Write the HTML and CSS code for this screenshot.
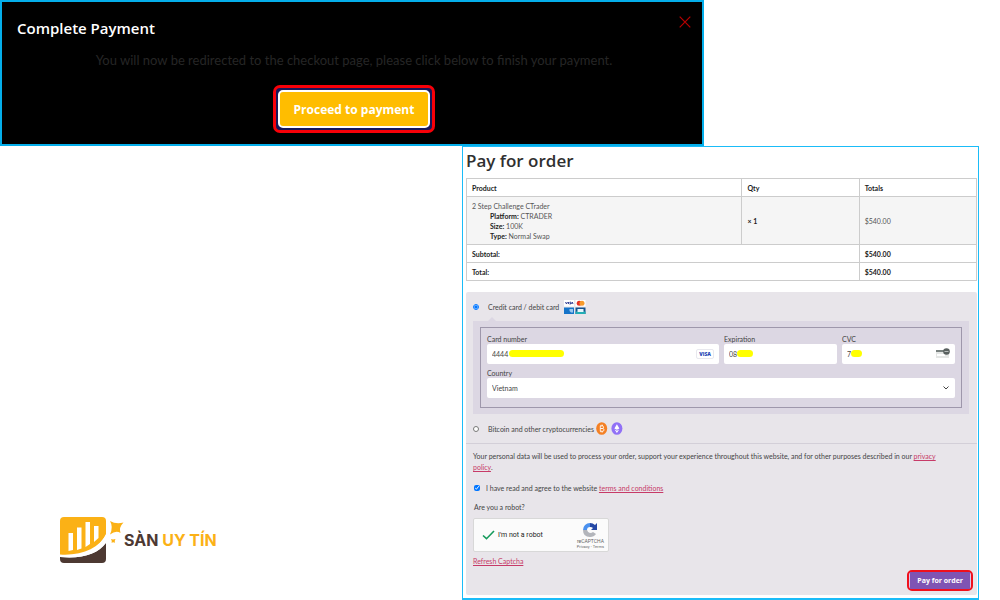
FILE: index.html
```html
<!DOCTYPE html>
<html lang="en">
<head>
<meta charset="utf-8">
<meta name="viewport" content="width=device-width, initial-scale=1">
<title>Pay for order</title>
<link rel="stylesheet" href="styles.css">
</head>
<body>
<section class="modal">
  <header class="modal-head">
    <h2 class="modal-title">Complete Payment</h2>
    <button class="close" type="button" aria-label="Close">
      <svg viewBox="0 0 12 12" width="12" height="12"><path d="M.7.7l10.6 10.6M11.3.7L.7 11.3" stroke="#b80000" stroke-width="1.200" fill="none"/></svg>
    </button>
  </header>
  <p class="modal-text">You will now be redirected to the checkout page, please click below to finish your payment.</p>
  <div class="proceed-ring"><button class="proceed" type="button">Proceed to payment</button></div>
</section>
<div class="lower">
  <aside class="brand">
    <svg class="brand-mark" viewBox="0 0 64 48" width="64" height="48" aria-hidden="true">
      <path d="M4 1h38q4 0 4 4v13C38 34 24 40 0 39V5q0-4 4-4z" fill="#fbb116"/>
      <path d="M0 41c22 2 38-3 46-14v16q0 4-4 4H4q-4 0-4-4z" fill="#4d3932"/>
      <path d="M8.500 17H13v17l-4.500 1zM17 11.500h4.500v21L17 34zM25.500 6H30v22l-4.500 3zM34 10h4.500v12L34 26z" fill="#fff"/>
      <path d="M0 38.500C22 40 39 32 46.500 18v8C38 38 23 43 0 41z" fill="#fff"/>
      <path d="M50 5q6 3.500 13.500 1.500-5 5-3 10.500-4.500-3-10.500 1.500Q53.500 11 50 5z" fill="#fbb116"/>
      <path d="M51 23l2 .5 2.500-.5-.8 2 .3 1.700-1.800-.5-1.700.6.3-1.800z" fill="#fbb116"/>
    </svg>
    <span class="brand-name">SÀN <span class="brand-accent">UY TÍN</span></span>
  </aside>
  <main class="order">
    <h1 class="order-title">Pay for order</h1>
    <table class="items">
      <colgroup><col class="col-product"><col class="col-qty"><col></colgroup>
      <thead><tr><th>Product</th><th>Qty</th><th>Totals</th></tr></thead>
      <tbody>
        <tr class="item">
          <td>2 Step Challenge CTrader
            <ul class="meta"><li><b>Platform:</b> CTRADER</li><li><b>Size:</b> 100K</li><li><b>Type:</b> Normal Swap</li></ul>
          </td>
          <td><b>× 1</b></td><td>$540.00</td>
        </tr>
      </tbody>
      <tfoot>
        <tr><th colspan="2">Subtotal:</th><th>$540.00</th></tr>
        <tr><th colspan="2">Total:</th><th>$540.00</th></tr>
      </tfoot>
    </table>
    <form class="payment">
      <div class="method">
        <input class="radio" type="radio" name="method" id="card" checked>
        <label for="card">Credit card / debit card</label>
        <svg class="cards" viewBox="0 0 22 14" width="22" height="14" aria-hidden="true">
          <path d="M0 0h10v6.500H0zM11.500 0h10v6.500h-10z" fill="#fff"/>
          <path d="M1.500 2l1 2 1-2M4.500 2v2M7 2.200H5.800L6.700 4H5.500M7.500 4l.7-2 .8 2" stroke="#26328c" stroke-width=".9" fill="none"/>
          <circle cx="15.200" cy="3.200" r="2.500" fill="#e83222"/><circle cx="18" cy="3.200" r="2.500" fill="#f79b2b"/>
          <path d="M0 7.500h10V14H0z" fill="#1674c9"/><path d="M5.500 9h3.500v3.500H7L5.500 11z" fill="#9bc9ef"/>
          <path d="M11.500 7.500h10V14h-10z" fill="#16528d"/><path d="M11.500 11.500h10V14h-10z" fill="#23aeb5"/><path d="M13.500 9h6v3h-6z" fill="#e6f5fa"/>
        </svg>
      </div>
      <div class="card-box">
        <fieldset class="fields">
          <div class="field">
            <label for="num">Card number</label>
            <div class="control"><input class="box" id="num" value="4444"><span class="mask mask-num"></span>
              <span class="visa">VISA</span></div>
          </div>
          <div class="field">
            <label for="exp">Expiration</label>
            <div class="control"><input class="box" id="exp" value="08"><span class="mask mask-exp"></span></div>
          </div>
          <div class="field">
            <label for="cvc">CVC</label>
            <div class="control"><input class="box" id="cvc" value="7"><span class="mask mask-cvc"></span>
              <svg class="cvc-icon" viewBox="0 0 14 11" width="14" height="11" aria-hidden="true"><path d="M0 2h13v8H0z" fill="#e4e6e5"/><path d="M0 2h9v2H0z" fill="#79817f"/><path d="M1 6h8v2H1z" fill="#fff"/><circle cx="10.500" cy="3.500" r="3.300" fill="#59605f"/><path d="M8.500 3.500h4" stroke="#b6bbba"/></svg>
            </div>
          </div>
          <div class="field field-wide">
            <label for="country">Country</label>
            <div class="control">
              <select class="box" id="country"><option>Vietnam</option></select>
              <svg class="chevron" viewBox="0 0 6 4" width="6" height="4" aria-hidden="true"><path d="M.5.5L3 3 5.500.5" stroke="#444" fill="none"/></svg>
            </div>
          </div>
        </fieldset>
      </div>
      <div class="method">
        <input class="radio" type="radio" name="method" id="crypto">
        <label for="crypto">Bitcoin and other cryptocurrencies</label>
        <svg class="coins" viewBox="0 0 27 13" width="27" height="13" aria-hidden="true">
          <ellipse cx="5.700" cy="6.500" rx="5.500" ry="6.300" fill="#f48024"/>
          <path d="M4.300 3.800v5.600M4 4h2.400q1.200 0 1.200 1.200T6.400 6.500H4.500h2.300Q8 6.500 8 7.900T6.600 9.200H4M5.200 2.700V4M5.200 9.200v1.200M6.500 2.700V4M6.500 9.200v1.200" stroke="#fff" stroke-width=".8" fill="none"/>
          <ellipse cx="20.900" cy="6.500" rx="5.500" ry="6.300" fill="#9171f6"/>
          <path d="M20.900 2.200l2.500 4.300-2.500 1.300-2.500-1.300zM18.600 7.500l2.300 1.200 2.300-1.200-2.300 3.400z" fill="#fff"/>
        </svg>
      </div>
      <div class="terms">
        <p class="privacy">Your personal data will be used to process your order, support your experience throughout this website, and for other purposes described in our <a href="#">privacy policy</a>.</p>
        <div class="agree"><input class="check" type="checkbox" id="agree" checked><label for="agree">I have read and agree to the website <a href="#">terms and conditions</a></label></div>
        <p class="robot-q">Are you a robot?</p>
        <div class="captcha">
          <svg viewBox="0 0 13 10" width="13" height="10" aria-hidden="true"><path d="M1 5.500l3.500 3.200L12 1" stroke="#159a5b" stroke-width="1.600" fill="none"/></svg>
          <span>I'm not a robot</span>
          <div class="recaptcha">
            <svg viewBox="0 0 16 16" width="16" height="16" aria-hidden="true">
              <path d="M1 8A7 7 0 0 1 8 1v4a3 3 0 0 0-3 3z" fill="#4a90ee"/>
              <path d="M8 1q3 0 5 2l2-2v7H9l2-2q-1-1-3-1z" fill="#2347a5"/>
              <path d="M1 8h4q1 3 3 3 2 0 3-1l3 2q-2 3-6 3-7 0-7-7z" fill="#b3b5bb"/>
            </svg>
            <span class="rc-name">reCAPTCHA</span><span class="rc-links">Privacy - Terms</span>
          </div>
        </div>
        <a class="refresh" href="#">Refresh Captcha</a>
        <div class="pay-ring"><button class="pay" type="button">Pay for order</button></div>
      </div>
    </form>
  </main>
</div>
</body>
</html>
```
FILE: styles.css
```css
* { box-sizing: border-box; }
body { margin: 0; background: #fff; color: #444; font-family: Lato, "Open Sans", sans-serif; font-size: 7px; line-height: 10px; }
h1, h2, p, ul { margin: 0; padding: 0; }
button, input, select { font: inherit; color: inherit; margin: 0; }
svg { display: block; flex: none; }
a { color: #c73a68; }

.modal { width: 70.4%; background: #000; border: 2px solid #04aeea; padding: 14px 11px 11px 15px; display: flex; flex-direction: column; align-items: center; }
.modal-head { align-self: stretch; display: flex; justify-content: space-between; align-items: flex-start; }
.modal-title { color: #fff; font: 600 15px/24px "Open Sans", sans-serif; }
.close { background: none; border: 0; padding: 0; }
.modal-text { color: #262626; font-size: 13px; line-height: 20px; margin-top: 10px; }
.proceed-ring { margin-top: 15px; border: 3px solid #f80008; border-radius: 7px; padding: 2px; background: #17175a; }
.proceed { display: block; height: 38px; padding: 2px 14px 0; border: 2px solid #fff; border-radius: 5px; background: #ffbd00; color: #fff; font: 700 12px/20px "Open Sans", sans-serif; }

.lower { display: grid; grid-template-columns: 462px minmax(0, 1fr); padding-right: 21px; }
.brand { align-self: end; display: flex; align-items: center; padding: 0 0 36px 60px; }
.brand-name { color: #4d3932; font: 700 16px/24px Inter, sans-serif; }
.brand-accent { color: #fbb116; }

.order { border: 1px solid #1abcf8; border-bottom-width: 2px; padding: 2px 1px 3px 3px; }
.order-title { color: #303030; font: 600 17px/24px "Open Sans", sans-serif; padding-bottom: 5px; }

.items { width: 100%; border-collapse: collapse; table-layout: fixed; color: #555; }
.items th, .items td { border: 1px solid #ccc; text-align: left; padding: 4px 5px 3px; }
.items th, .items b { color: #222; font-weight: 700; }
.items .item td { background: #f5f5f5; }
.col-product { width: 54%; }
.col-qty { width: 23%; }
.meta { list-style: none; padding-left: 18px; }

.payment { margin-top: 11px; background: #e8e5ea; border-radius: 2px; }
.method { display: flex; align-items: center; height: 29px; padding-left: 7px; }
.radio { width: 6px; height: 6px; margin-right: 9px; }
.cards { margin-left: 5px; }
.card-box { position: relative; margin: 0 8px 0 7px; padding: 6px 7px 6px 7px; background: #dcd7e3; }
.card-box::before { content: ""; position: absolute; left: 15px; top: -4px; border: 4px solid transparent; border-top: 0; border-bottom-color: #dcd7e3; }
.fields { margin: 0; min-width: 0; border: 1px solid #9e97ab; padding: 6px 6px 9px; display: grid; grid-template-columns: 232fr 113fr 113fr; gap: 4px 5px; }
.field-wide { grid-column: 1 / -1; }
.field > label { display: block; }
.control { position: relative; }
.box { display: block; width: 100%; height: 20px; border: 0; border-radius: 2px; background: #fff; padding: 0 5px; appearance: none; }
.mask { position: absolute; top: 6px; height: 7px; border-radius: 4px; background: #ff0; }
.mask-num { left: 22px; width: 55px; }
.mask-exp { left: 13px; width: 16px; }
.mask-cvc { left: 9px; width: 11px; }
.visa { position: absolute; right: 5px; top: 5px; padding: 0 2px; border: 1px solid #e8e8ee; border-radius: 2px; color: #2547b5; font: 800 5px/8px "Open Sans", sans-serif; }
.cvc-icon { position: absolute; right: 5px; top: 4px; }
.chevron { position: absolute; right: 6px; top: 8px; }
.coins { margin-left: 2px; }

.terms { border-top: 1px solid #d3cfd8; padding: 7px 4px 4px 7px; }
.privacy { line-height: 11px; padding-right: 20px; }
.agree { display: flex; align-items: center; margin-top: 10px; }
.check { width: 6px; height: 6px; margin: 0 6px 0 1px; }
.robot-q { margin: 9px 0 6px 1px; }
.captcha { width: 136px; height: 34px; display: flex; align-items: center; gap: 3px; padding: 0 4px 0 8px; background: #fbfbfb; border: 1px solid #d8d8d8; border-radius: 2px; color: #222; font-family: Roboto, sans-serif; }
.recaptcha { margin-left: auto; display: flex; flex-direction: column; align-items: center; color: #666; }
.rc-name { font-size: 5px; line-height: 6px; }
.rc-links { font-size: 4px; line-height: 5px; }
.refresh { display: inline-block; margin-top: 4px; }
.pay-ring { width: fit-content; margin: 4px 0 0 auto; border: 2px solid #f0101c; border-radius: 5px; padding: 0 1px; background: #d9c7ea; }
.pay { display: block; height: 17px; border: 0; padding: 0 7px; background: #7f54b3; color: #fff; font: 700 7px/10px "Open Sans", sans-serif; }
```
